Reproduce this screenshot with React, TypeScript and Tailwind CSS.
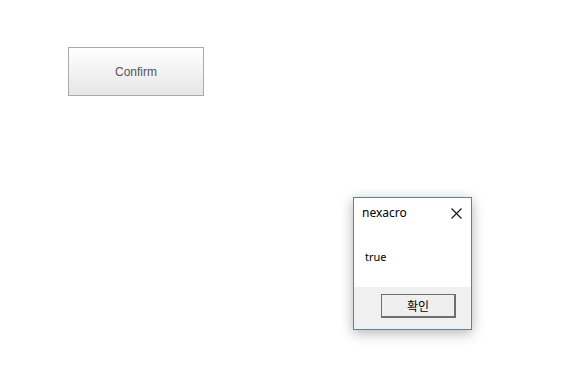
export default function App() {
  return (
    <div className="w-[568px] h-[372px] bg-white pt-[47px] font-['Liberation_Sans',sans-serif]">
      <button className="ml-[68px] w-[136px] h-[49px] border border-[#a9a9a9] bg-gradient-to-b from-white to-[#e6e6e6] text-[12px] text-[#555] flex items-center justify-center">
        Confirm
      </button>

      <div className="ml-[353px] mt-[101px] w-[119px] h-[133px] border border-[#5b8597] bg-white flex flex-col shadow-[0_3px_12px_rgba(0,0,0,0.3)] font-['Noto_Sans','Noto_Sans_CJK_KR',sans-serif]">
        <div className="h-[30px] flex items-center justify-between pl-[8px] pr-[9px] text-[12px] text-black">
          <span>nexacro</span>
          <svg width="11" height="11" viewBox="0 0 11 11" className="mt-[1px]">
            <path d="M0.5 0.5L10.5 10.5M10.5 0.5L0.5 10.5" stroke="#111" strokeWidth="1.1" />
          </svg>
        </div>
        <div className="flex-1 pl-[11px] pt-[23px] text-[11px] text-black leading-none">true</div>
        <div className="h-[42px] bg-[#f0f0f0] flex items-start justify-end pt-[7px] pr-[15px]">
          <button className="w-[75px] h-[24px] border border-[#6e6e6e] border-b-2 border-r-2 bg-[#efefef] text-[12px] font-normal text-black flex items-center justify-center font-['Noto_Sans_CJK_KR',sans-serif]">
            확인
          </button>
        </div>
      </div>
    </div>
  );
}
